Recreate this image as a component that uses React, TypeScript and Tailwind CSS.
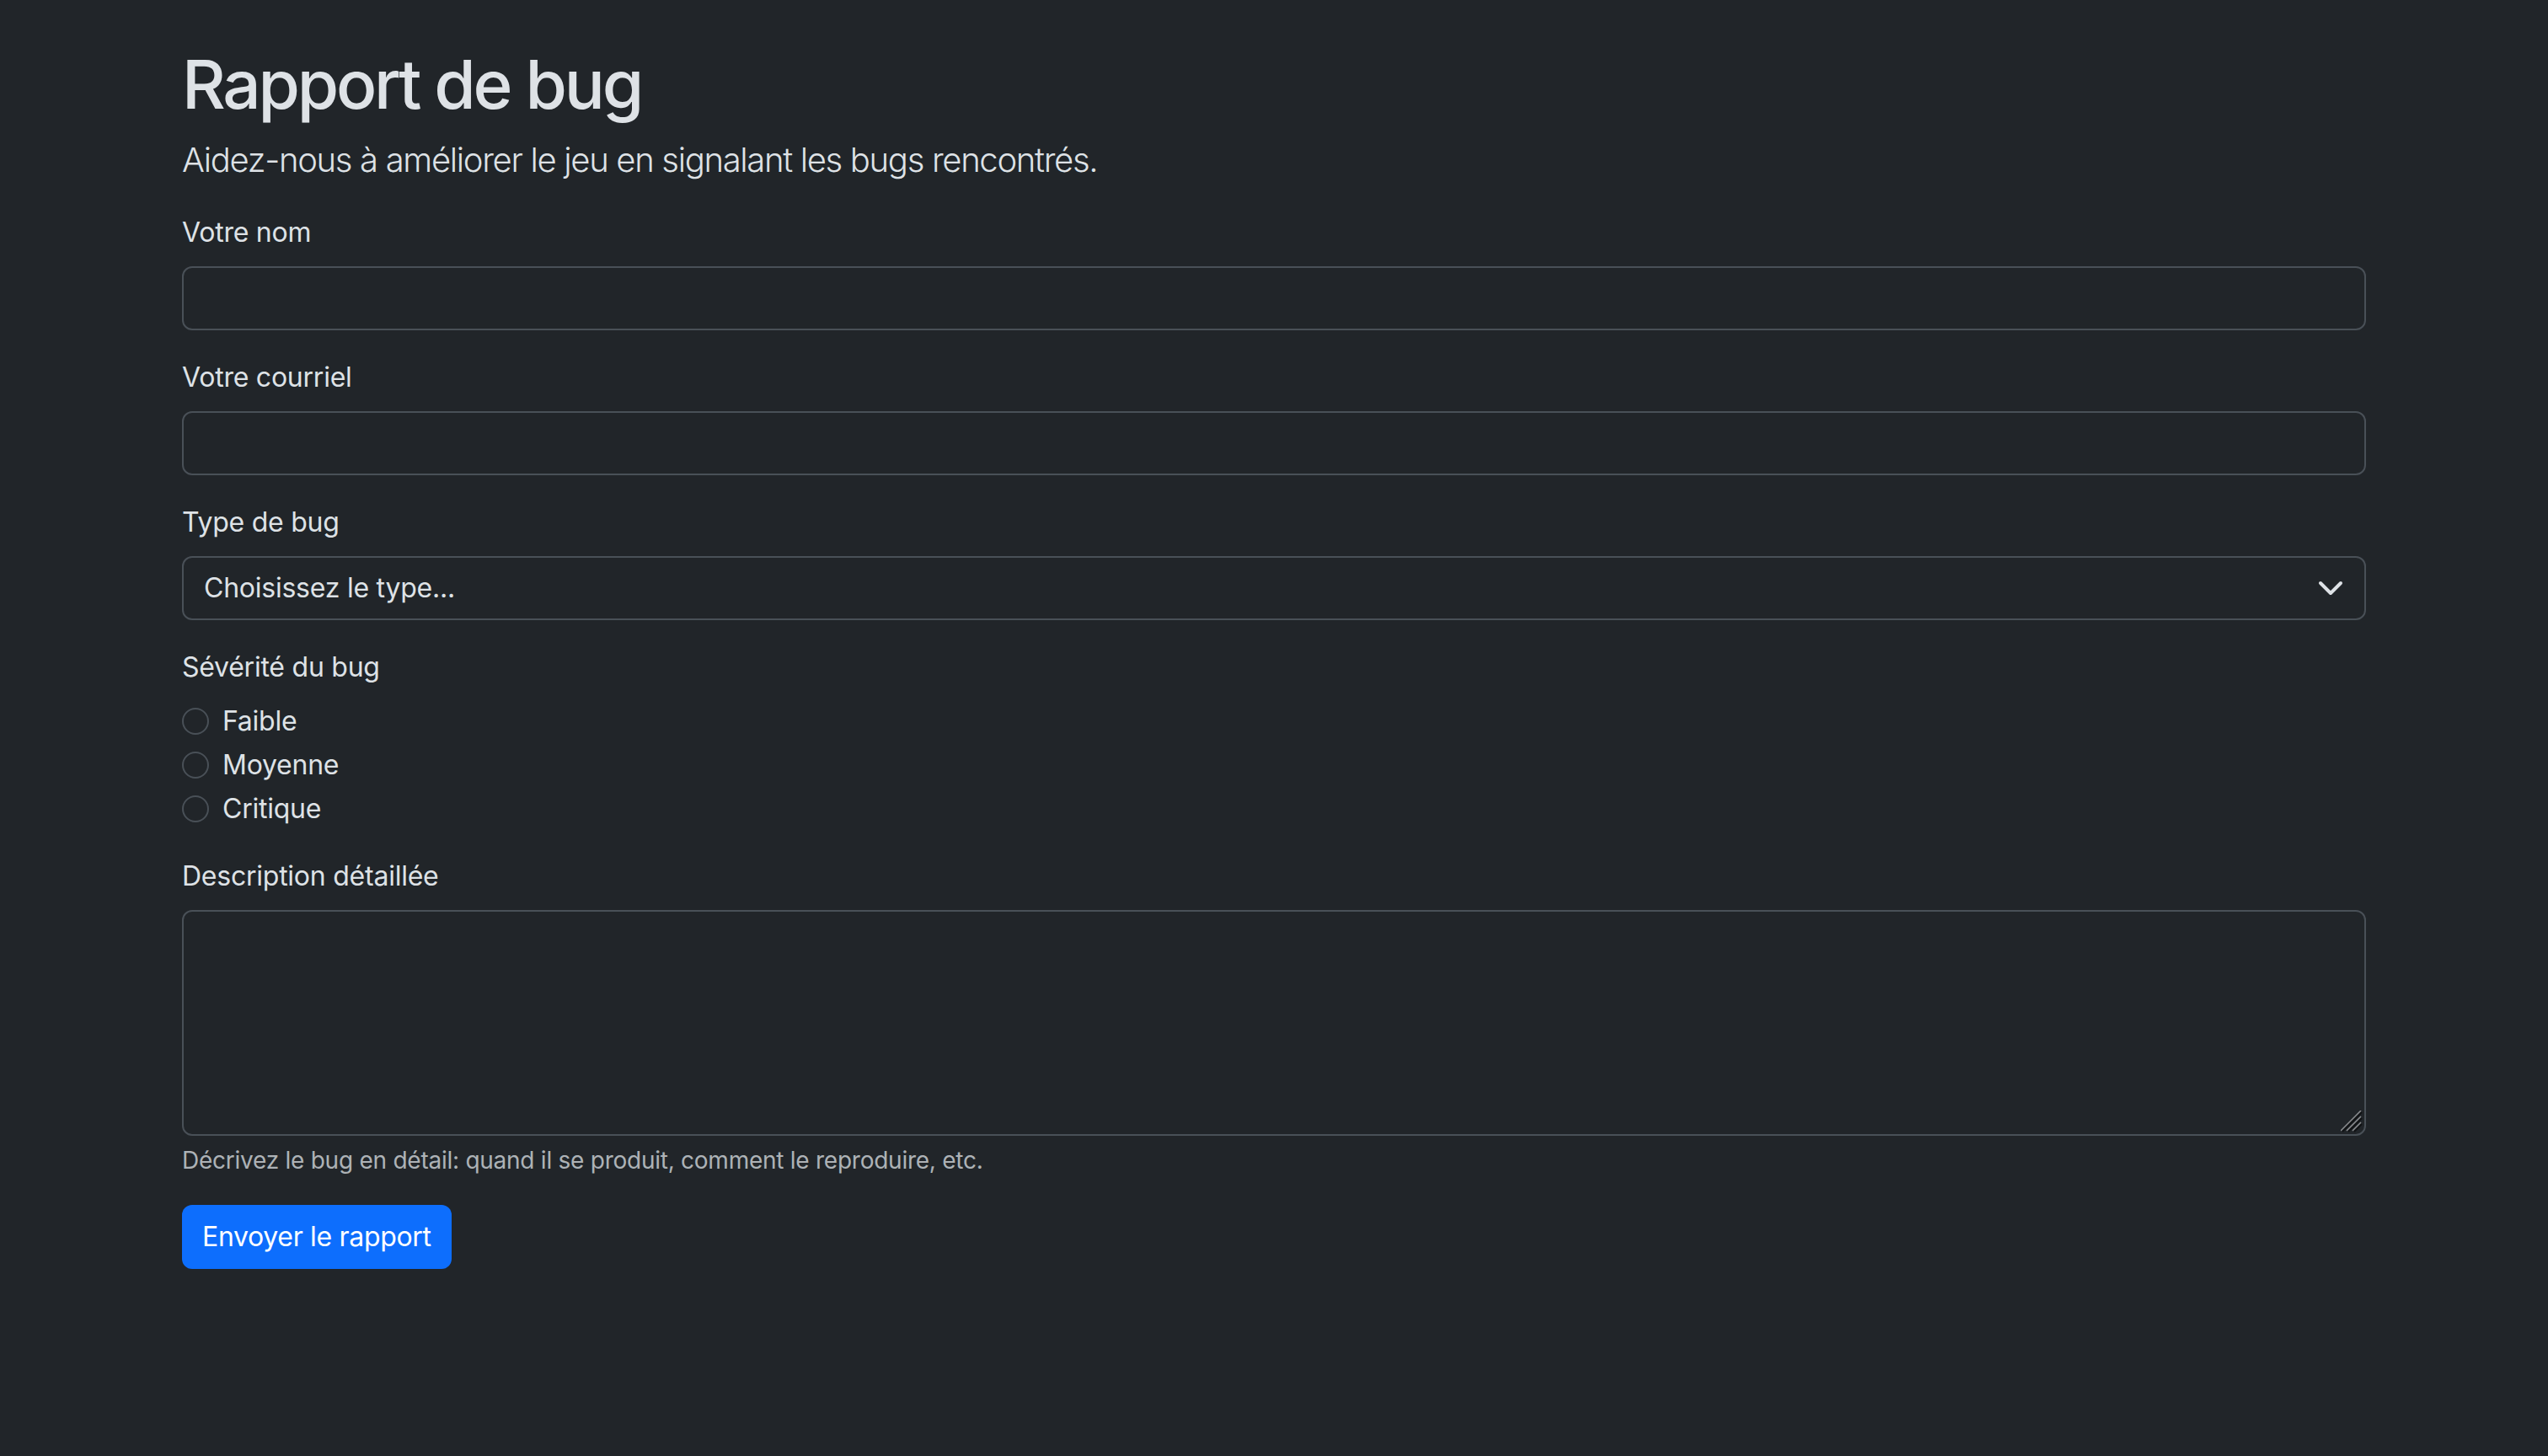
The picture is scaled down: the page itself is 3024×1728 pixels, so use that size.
import React from "react";

const font = "font-['Inter','Noto_Sans','Liberation_Sans',sans-serif]";

const Field: React.FC<{ label: string; children: React.ReactNode }> = ({ label, children }) => (
  <div className="mb-[32px]">
    <label className="block mb-[16px] text-[32px] leading-[48px]">{label}</label>
    {children}
  </div>
);

const TextInput: React.FC<{ type?: string }> = ({ type = "text" }) => (
  <input
    type={type}
    className="block w-full h-[76px] px-[24px] bg-[#212529] border-2 border-[#495057] rounded-[12px] text-[32px] text-[#dee2e6] outline-none"
  />
);

const Radio: React.FC<{ label: string }> = ({ label }) => (
  <div className="flex items-start h-[48px] mb-[4px]">
    <span className="mt-[8px] w-[32px] h-[32px] rounded-full border-2 border-[#495057] shrink-0" />
    <span className="ml-[16px] text-[32px] leading-[48px]">{label}</span>
  </div>
);

export default function App() {
  return (
    <div className={`min-h-screen bg-[#212529] text-[#dee2e6] tracking-[-0.015em] ${font}`}>
      <div className="mx-auto w-[2640px] px-[24px] pt-[48px] pb-[96px]">
        <h1 className="pt-[4px] text-[80px] leading-[96px] font-medium tracking-[-0.04em] mb-[12px]">
          Rapport de bug
        </h1>
        <p className="text-[40px] leading-[60px] font-light tracking-[-0.033em] mb-[32px]">
          Aidez-nous à améliorer le jeu en signalant les bugs rencontrés.
        </p>

        <form onSubmit={(e) => e.preventDefault()}>
          <Field label="Votre nom">
            <TextInput />
          </Field>

          <Field label="Votre courriel">
            <TextInput type="email" />
          </Field>

          <Field label="Type de bug">
            <div className="flex items-center justify-between w-full h-[76px] pl-[24px] pr-[24px] border-2 border-[#495057] rounded-[12px] text-[32px] leading-[48px]">
              <span>Choisissez le type...</span>
              <svg width="32" height="32" viewBox="0 0 16 16" fill="none">
                <path
                  d="M2 5l6 6 6-6"
                  stroke="#dee2e6"
                  strokeWidth="2"
                  strokeLinecap="round"
                  strokeLinejoin="round"
                />
              </svg>
            </div>
          </Field>

          <Field label="Sévérité du bug">
            <Radio label="Faible" />
            <Radio label="Moyenne" />
            <Radio label="Critique" />
          </Field>

          <div className="mb-[32px]">
            <label className="block mb-[16px] text-[32px] leading-[48px]">Description détaillée</label>
            <div className="relative">
              <textarea className="block w-full h-[268px] px-[24px] py-[12px] bg-[#212529] border-2 border-[#495057] rounded-[12px] text-[32px] text-[#dee2e6] outline-none resize-none" />
              {/* resize grip */}
              <svg
                className="absolute right-[4px] bottom-[4px]"
                width="26"
                height="26"
                viewBox="0 0 26 26"
              >
                <path d="M2 25L25 2M9 25L25 9M16 25L25 16" stroke="#111315" strokeWidth="2" />
                <path d="M0 24L24 0M7 24L24 7M14 24L24 14" stroke="#8d8f92" strokeWidth="1.5" />
              </svg>
            </div>
            <div className="mt-[8px] text-[28px] leading-[42px] tracking-[-0.009em] text-[#dee2e6bf]">
              Décrivez le bug en détail: quand il se produit, comment le reproduire, etc.
            </div>
          </div>

          <button
            type="submit"
            className="h-[76px] px-[24px] bg-[#0d6efd] text-white rounded-[12px] text-[32px] leading-[48px] tracking-[-0.01em]"
          >
            Envoyer le rapport
          </button>
        </form>
      </div>
    </div>
  );
}
